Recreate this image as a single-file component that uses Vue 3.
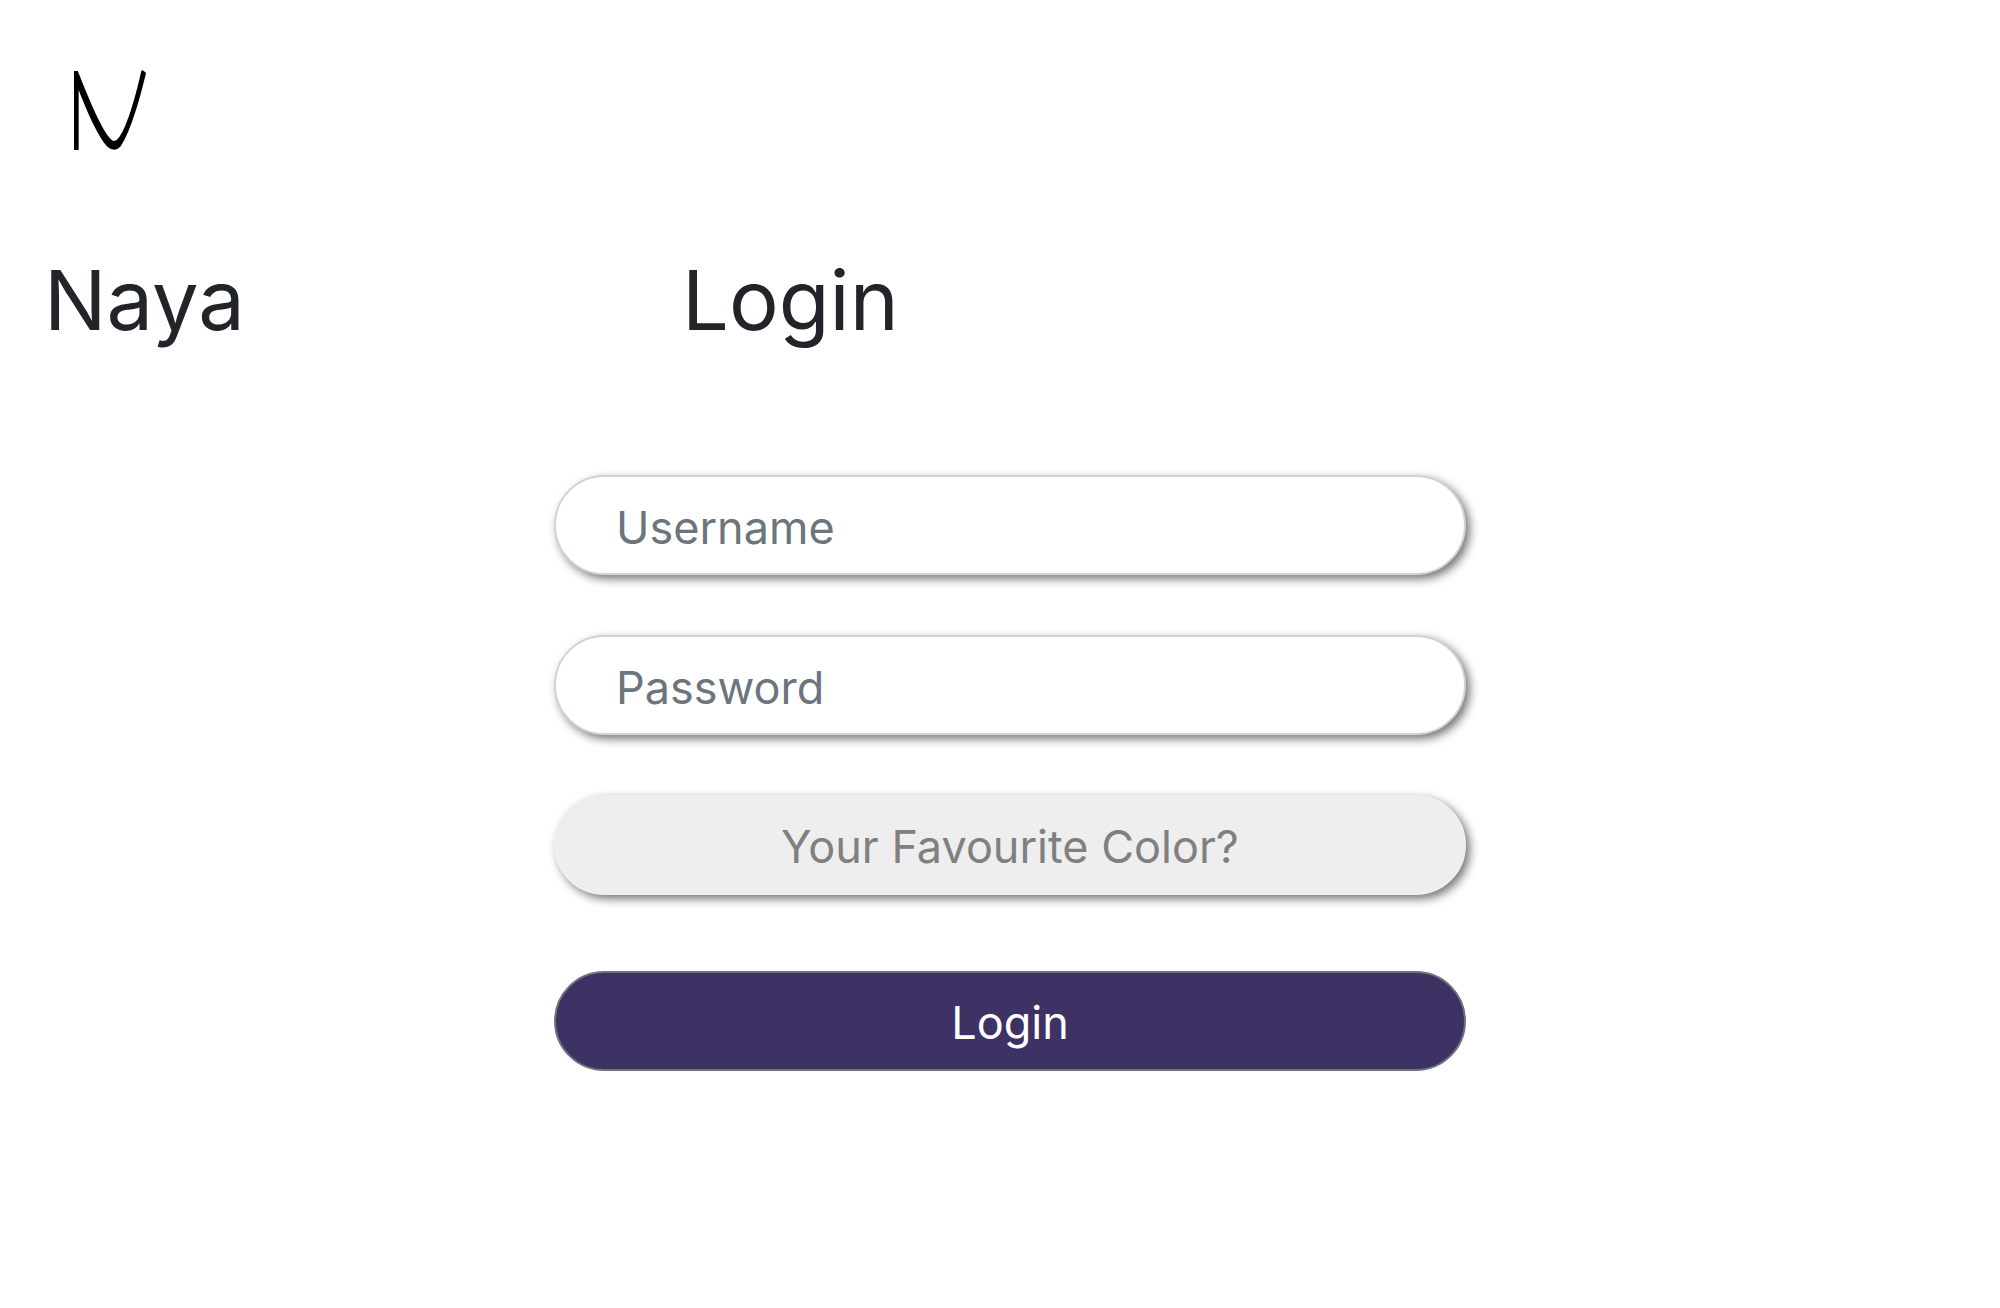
<script setup>
import { ref } from 'vue'

const username = ref('')
const password = ref('')
</script>

<template>
  <div class="page">
    <header class="brand">
      <svg class="logo" viewBox="0 0 216 240" role="img" aria-label="Naya logo">
        <path d="M0 3H11L14 10C48 96 84 180 110 207Q121 220 133 205C161 170 188 66 202 2Q206 -3 216 9C202 70 171 184 140 229Q123 249 101 231C75 203 43 136 14 60V240H0Z" />
      </svg>
    </header>
    <main class="columns">
      <h1 class="title">Naya</h1>
      <section class="login">
        <h2 class="title heading">Login</h2>
        <form class="form" @submit.prevent>
          <input v-model="username" class="control field" type="text" placeholder="Username" aria-label="Username">
          <input v-model="password" class="control field" type="password" placeholder="Password" aria-label="Password">
          <button class="control hint" type="button">Your Favourite Color?</button>
          <button class="control submit" type="submit">Login</button>
        </form>
      </section>
    </main>
  </div>
</template>

<style>
body {
  margin: 0;
  background: #fff;
}
</style>

<style scoped>
.page {
  font-family: Inter, "Liberation Sans", sans-serif;
  color: #212529;
}
.brand {
  padding: 70px 74px 0;
}
.logo {
  display: block;
  width: 72px;
  height: 80px;
  fill: #000;
}
.columns {
  display: grid;
  grid-template-columns: 25% 1fr 25%;
  padding: 96px 60px 0 44px;
}
.title {
  margin: 0;
  font-size: 83px;
  line-height: 108px;
  font-weight: 400;
}
.login {
  padding-left: 36px;
}
.heading {
  padding-left: 128px;
}
.form {
  display: flex;
  flex-direction: column;
  gap: 60px;
  padding-top: 121px;
}
.control {
  box-sizing: border-box;
  width: 100%;
  height: 100px;
  padding: 4px 60px 0;
  border: 2px solid #ced4da;
  border-radius: 50px;
  font: inherit;
  font-size: 45px;
  line-height: 72px;
}
.field {
  background: #fff;
  color: #212529;
  box-shadow: 4px 4px 10px #777;
}
.field::placeholder {
  color: #6c757d;
  opacity: 1;
}
.hint {
  border-color: #efefef;
  background: #eee;
  color: #808080;
  box-shadow: 4px 4px 10px #777;
}
.submit {
  margin-top: 16px;
  border-color: #6c757d;
  background: #3d3263;
  color: #fff;
}
</style>
